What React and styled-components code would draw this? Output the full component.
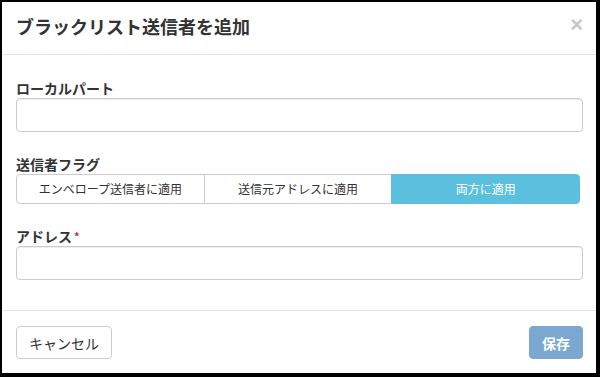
import React from "react";
import styled, { createGlobalStyle } from "styled-components";

const Global = createGlobalStyle`
  html, body { margin: 0; padding: 0; background: #fff; }
  body { font-family: "Noto Sans CJK JP", "Noto Sans", sans-serif; color: #333; }
  * { box-sizing: border-box; }
`;

const Frame = styled.div`
  width: 600px;
  height: 377px;
  border-style: solid;
  border-color: #000;
  border-width: 2px 4px 4px 2px;
  background: #fff;
  display: flex;
  flex-direction: column;
  overflow: hidden;
`;

const Header = styled.div`
  height: 53px;
  padding: 0 14px;
  border-bottom: 1px solid #e5e5e5;
  display: flex;
  align-items: center;
  justify-content: space-between;
`;

const Title = styled.h4`
  margin: 0;
  font-size: 18px;
  line-height: 24px;
  font-weight: 700;
  color: #333;
  padding-bottom: 4px;
`;

const Close = styled.span`
  font-family: "Liberation Sans", Arial, sans-serif;
  font-size: 22px;
  font-weight: 700;
  line-height: 1;
  color: #c8c8c8;
  margin-right: -1px;
  padding-bottom: 6px;
`;

const Body = styled.div`
  padding: 23px 13px 30px 14px;
  display: flex;
  flex-direction: column;
  gap: 22px;
  border-bottom: 1px solid #e5e5e5;
`;

const Group = styled.div`
  display: flex;
  flex-direction: column;
`;

const Label = styled.label`
  font-size: 14px;
  line-height: 20px;
  height: 20px;
  font-weight: 700;
  color: #333;
`;

const Req = styled.span`
  color: #c9302c;
  font-size: 11px;
  vertical-align: top;
  margin-left: 2px;
`;

const Input = styled.input`
  height: 34px;
  width: 100%;
  border: 1px solid #ccc;
  border-radius: 4px;
  box-shadow: inset 0 1px 1px rgba(0, 0, 0, 0.075);
  font-size: 14px;
  padding: 6px 12px;
  outline: none;
`;

const Segments = styled.div`
  display: flex;
  margin-right: 3px;
`;

const Segment = styled.button`
  flex: 1;
  height: 30px;
  font-family: "Noto Sans CJK JP", "Noto Sans", sans-serif;
  font-size: 12px;
  line-height: 1;
  color: ${(p) => (p.$active ? "#fff" : "#333")};
  background: ${(p) => (p.$active ? "#5bc0de" : "#fff")};
  border: 1px solid ${(p) => (p.$active ? "#5bc0de" : "#ccc")};
  margin-left: -1px;
  padding: 0 12px;
  &:first-child {
    margin-left: 0;
    border-radius: 4px 0 0 4px;
  }
  &:last-child {
    border-radius: 0 4px 4px 0;
  }
`;

const Footer = styled.div`
  flex: 1;
  padding: 15px 13px 0 14px;
  display: flex;
  justify-content: space-between;
  align-items: flex-start;
`;

const Button = styled.button`
  height: 33px;
  padding: 0 12px;
  font-family: "Noto Sans CJK JP", "Noto Sans", sans-serif;
  font-size: 14px;
  line-height: 1;
  border-radius: 4px;
  border: 1px solid ${(p) => (p.$primary ? "#7aa8d0" : "#ccc")};
  background: ${(p) => (p.$primary ? "#7aa8d0" : "#fff")};
  color: ${(p) => (p.$primary ? "#fff" : "#333")};
  font-weight: ${(p) => (p.$primary ? 700 : 400)};
`;

export default function App() {
  return (
    <>
      <Global />
      <Frame>
        <Header>
          <Title>ブラックリスト送信者を追加</Title>
          <Close>×</Close>
        </Header>
        <Body>
          <Group>
            <Label>ローカルパート</Label>
            <Input type="text" />
          </Group>
          <Group>
            <Label>送信者フラグ</Label>
            <Segments>
              <Segment>エンベロープ送信者に適用</Segment>
              <Segment>送信元アドレスに適用</Segment>
              <Segment $active>両方に適用</Segment>
            </Segments>
          </Group>
          <Group>
            <Label>
              アドレス<Req>*</Req>
            </Label>
            <Input type="text" />
          </Group>
        </Body>
        <Footer>
          <Button>キャンセル</Button>
          <Button $primary>保存</Button>
        </Footer>
      </Frame>
    </>
  );
}
